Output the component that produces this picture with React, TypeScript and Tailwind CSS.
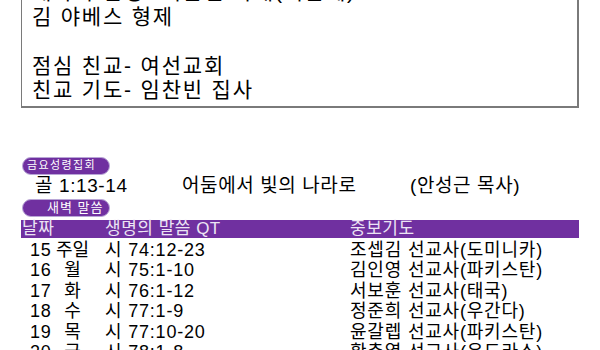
const rows = [
  { d: '15', w: '주일', qt: '시 74:12-23', pray: '조셉김 선교사(도미니카)' },
  { d: '16', w: '월', qt: '시 75:1-10', pray: '김인영 선교사(파키스탄)' },
  { d: '17', w: '화', qt: '시 76:1-12', pray: '서보훈 선교사(태국)' },
  { d: '18', w: '수', qt: '시 77:1-9', pray: '정준희 선교사(우간다)' },
  { d: '19', w: '목', qt: '시 77:10-20', pray: '윤갈렙 선교사(파키스탄)' },
  { d: '20', w: '금', qt: '시 78:1-8', pray: '황춘열 선교사(온드라스)' },
];

function Badge({ children, className }: { children: React.ReactNode; className: string }) {
  return (
    <div
      className={`ml-[22px] flex h-[18px] w-[88px] items-center rounded-full border border-[#b9a6d6] bg-[#7030a0] leading-none text-white ${className}`}
    >
      {children}
    </div>
  );
}

export default function App() {
  return (
    <div
      className="h-[350px] w-[600px] overflow-hidden bg-white text-black"
      style={{ fontFamily: '"Liberation Sans", "Noto Sans CJK KR", sans-serif' }}
    >
      {/* notice box, top cut off */}
      <div className="-mt-[20px] ml-[21px] w-[558px] border-b-2 border-l border-r-2 border-[#7a7a7a] pb-[3px] pl-[10px] text-[21px] leading-[24.5px] tracking-[1.8px]">
        <div>새가족 환영- 이은진 자매(이은혜)</div>
        <div>김 야베스 형제</div>
        <div className="h-[24.5px]" />
        <div>점심 친교- 여선교회</div>
        <div>친교 기도- 임찬빈 집사</div>
      </div>

      <div className="mt-[49px]">
        <Badge className="pl-[4px] text-[11px] tracking-[1.4px]">금요성령집회</Badge>
        <div className="flex h-[24px] items-center text-[19px] tracking-[0.6px]">
          <span className="ml-[35px] w-[147px]">골 1:13-14</span>
          <span className="w-[228px]">어둠에서 빛의 나라로</span>
          <span>(안성근 목사)</span>
        </div>
        <Badge className="pl-[24px] text-[13px] tracking-[1px]">새벽 말씀</Badge>

        <div className="mt-[3px] ml-[21px] w-[558px]">
          <div className="flex h-[18px] items-center bg-[#7030a0] text-[17px] leading-none tracking-[0.5px] text-[#ece4f4]">
            <span className="w-[84px] pl-[1px]">날짜</span>
            <span className="w-[245px]">생명의 말씀 QT</span>
            <span>중보기도</span>
          </div>
          <div className="pt-[2px]">
            {rows.map((r) => (
              <div key={r.d} className="flex h-[20.5px] items-center text-[18px] leading-none tracking-[0.8px]">
                <span className="ml-[9px] w-[25px]">{r.d}</span>
                <span className="w-[35px] text-center tracking-normal">{r.w}</span>
                <span className="ml-[15px] w-[245px]">{r.qt}</span>
                <span>{r.pray}</span>
              </div>
            ))}
          </div>
        </div>
      </div>
    </div>
  );
}
